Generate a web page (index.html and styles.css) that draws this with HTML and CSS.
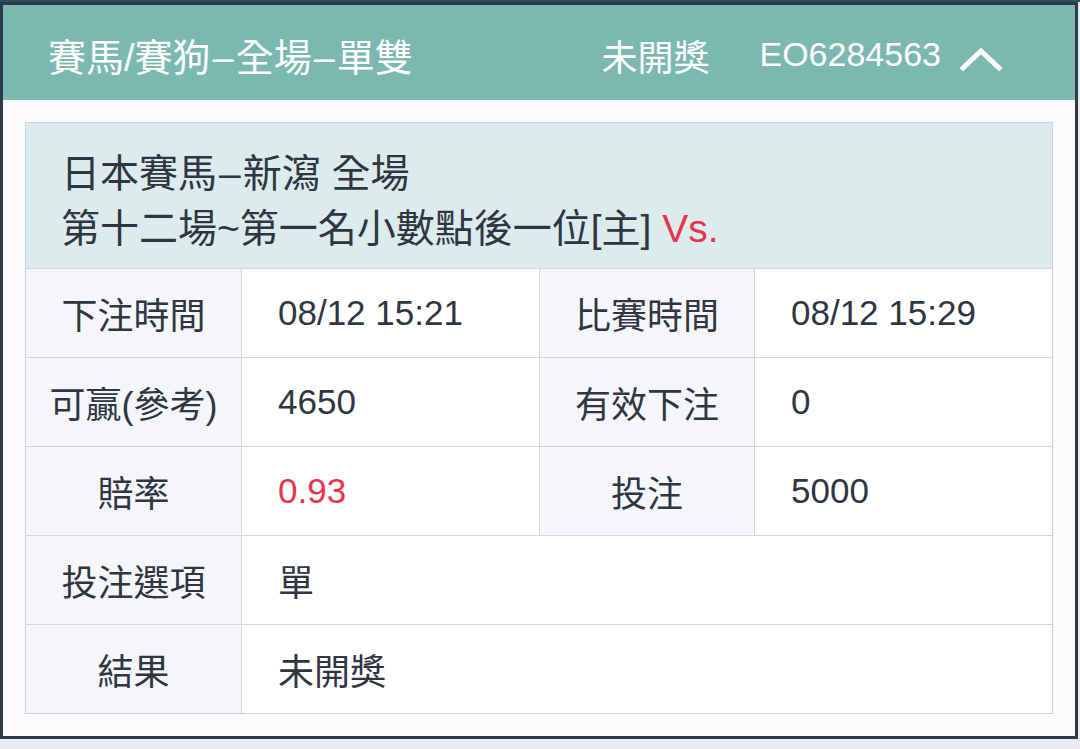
FILE: index.html
```html
<!DOCTYPE html>
<html lang="zh-Hant">
<head>
<meta charset="utf-8">
<link rel="stylesheet" href="styles.css">
</head>
<body>
<div class="topbar"></div>
<div class="card">
  <div class="head">
    <div class="title">賽馬/賽狗<span class="dash">–</span>全場<span class="dash">–</span>單雙</div>
    <div class="status">未開獎</div>
    <div class="code">EO6284563</div>
    <svg class="chev" width="44" height="26" viewBox="0 0 44 26"><polyline points="4,22 22,5 40,22" fill="none" stroke="#fff" stroke-width="5" stroke-linecap="square"/></svg>
  </div>
  <div class="body">
    <div class="box">
      <div class="match">
        <div>日本賽馬<span class="dash">–</span>新瀉 全場</div>
        <div>第十二場~第一名小數點後一位[主] <span class="red">Vs.</span></div>
      </div>
      <div class="grid">
        <div class="lab">下注時間</div>
        <div class="val">08/12 15:21</div>
        <div class="lab">比賽時間</div>
        <div class="val">08/12 15:29</div>
        <div class="lab">可贏(參考)</div>
        <div class="val">4650</div>
        <div class="lab">有效下注</div>
        <div class="val">0</div>
        <div class="lab">賠率</div>
        <div class="val red">0.93</div>
        <div class="lab">投注</div>
        <div class="val">5000</div>
        <div class="lab">投注選項</div>
        <div class="val wide">單</div>
        <div class="lab">結果</div>
        <div class="val wide">未開獎</div>
      </div>
    </div>
  </div>
</div>
</body>
</html>
```
FILE: styles.css
```css
html, body {
  margin: 0;
  padding: 0;
  background: #e9ebee;
  font-family: "Liberation Sans", "Noto Sans CJK TC", sans-serif;
}
.topbar {
  height: 2px;
  background: #255457;
}
.card {
  width: 1072px;
  border: 3px solid #2e3a4a;
  background: #fafbfc;
}
.head {
  height: 95px;
  box-sizing: border-box;
  padding: 4px 72px 0 45px;
  background: #7ab8b0;
  color: #fff;
  display: flex;
  align-items: center;
  font-size: 36px;
}
.title {
  flex: 1;
  font-size: 38px;
}
.dash {
  margin: 0 2px;
}
.status {
  margin-right: 50px;
}
.code {
  font-size: 34px;
  margin-right: 18px;
}
.chev {
  display: block;
  margin-top: 8px;
}
.body {
  padding: 22px;
}
.box {
  border: 1px solid #cdd1d9;
  color: #2f3642;
  font-size: 35px;
}
.match {
  background: #dcecec;
  padding: 23px 36px 12px 35px;
  line-height: 55px;
  font-size: 39px;
  border-bottom: 1px solid #d3d6dd;
}
.red {
  color: #e8344e;
}
.grid {
  display: grid;
  grid-template-columns: 215px 297px 214px 1fr;
  grid-auto-rows: 88px;
  gap: 1px;
  background: #d3d6dd;
}
.lab {
  background: #f5f6f9;
  display: flex;
  align-items: center;
  justify-content: center;
  font-size: 36px;
}
.val {
  background: #fff;
  display: flex;
  align-items: center;
  padding-left: 36px;
}
.val.red {
  color: #e8344e;
}
.wide {
  grid-column: span 3;
  font-size: 36px;
}
```
